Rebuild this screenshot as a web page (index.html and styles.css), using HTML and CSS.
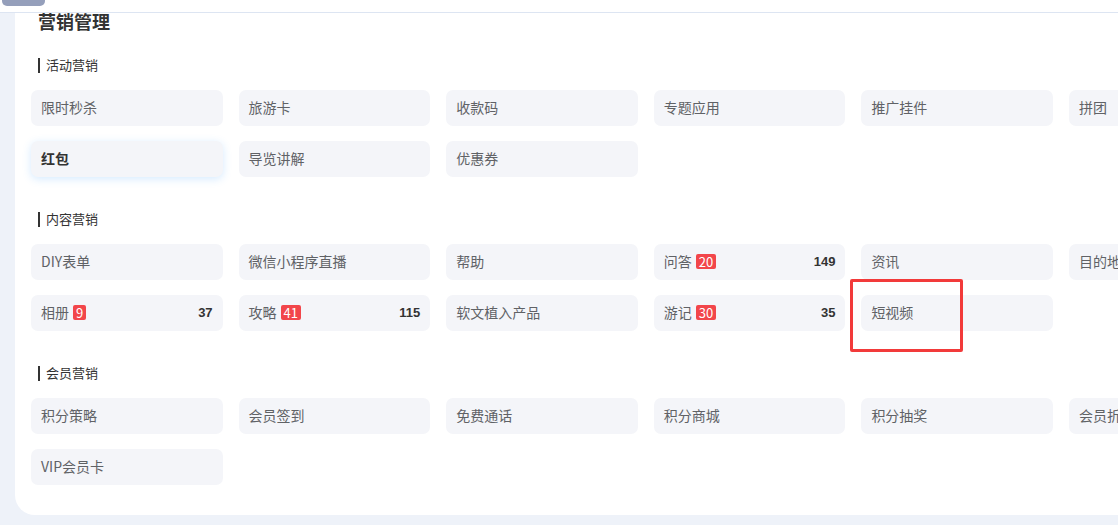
FILE: index.html
```html
<!DOCTYPE html>
<html lang="zh-CN">
<head>
<meta charset="UTF-8">
<meta name="viewport" content="width=device-width, initial-scale=1.0">
<title>营销管理</title>
<link rel="stylesheet" href="styles.css">
</head>
<body>
    <div class="topbar"><span class="topbar-tab"></span></div>

    <div class="card">
        <h1 class="page-title">营销管理</h1>

        <div class="section">
            <div class="section-title">活动营销</div>
            <div class="menu-grid">
                <div class="menu-item">限时秒杀</div>
                <div class="menu-item">旅游卡</div>
                <div class="menu-item">收款码</div>
                <div class="menu-item">专题应用</div>
                <div class="menu-item">推广挂件</div>
                <div class="menu-item">拼团</div>
                <div class="menu-item active">红包</div>
                <div class="menu-item">导览讲解</div>
                <div class="menu-item">优惠券</div>
            </div>
        </div>

        <div class="section">
            <div class="section-title">内容营销</div>
            <div class="menu-grid">
                <div class="menu-item">DIY表单</div>
                <div class="menu-item">微信小程序直播</div>
                <div class="menu-item">帮助</div>
                <div class="menu-item">问答<span class="badge">20</span><span class="count">149</span></div>
                <div class="menu-item">资讯</div>
                <div class="menu-item">目的地</div>
                <div class="menu-item">相册<span class="badge">9</span><span class="count">37</span></div>
                <div class="menu-item">攻略<span class="badge">41</span><span class="count">115</span></div>
                <div class="menu-item">软文植入产品</div>
                <div class="menu-item">游记<span class="badge">30</span><span class="count">35</span></div>
                <div class="menu-item marked">短视频<span class="mark-box"></span></div>
            </div>
        </div>

        <div class="section">
            <div class="section-title">会员营销</div>
            <div class="menu-grid">
                <div class="menu-item">积分策略</div>
                <div class="menu-item">会员签到</div>
                <div class="menu-item">免费通话</div>
                <div class="menu-item">积分商城</div>
                <div class="menu-item">积分抽奖</div>
                <div class="menu-item">会员折扣</div>
                <div class="menu-item">VIP会员卡</div>
            </div>
        </div>
    </div>
</body>
</html>
```

FILE: styles.css
```css
body {
    margin: 0;
    background-color: #eef2f9;
    font-family: "Noto Sans CJK SC", "Noto Sans", sans-serif;
    color: #333;
    overflow: hidden;
}

/* barra superior fixa por cima do conteúdo */
.topbar {
    position: fixed;
    top: 0;
    left: 0;
    right: 0;
    height: 12px;
    background-color: #fff;
    border-bottom: 1px solid #dde5f2;
    z-index: 10;
}
.topbar-tab {
    position: absolute;
    left: 2px;
    top: 0;
    width: 43px;
    height: 6px;
    background-color: #959fbb;
    border-radius: 0 0 5px 5px;
}

.card {
    margin-left: 15px;
    width: 1300px;
    background-color: #fff;
    border-radius: 0 0 0 20px;
    padding: 10px 0 30px 16px;
}

.page-title {
    margin: -1px 0 22px 7px;
    font-size: 18px;
    line-height: 24px;
    font-weight: bold;
    color: #333;
}

.section + .section {
    margin-top: 32px;
}
.section-title {
    display: flex;
    align-items: center;
    margin: 0 0 15px 7px;
    font-size: 13px;
    line-height: 20px;
    color: #333;
}
.section-title::before {
    content: "";
    width: 2px;
    height: 15px;
    background-color: #333;
    margin-right: 6px;
}

.menu-grid {
    display: grid;
    grid-template-columns: repeat(6, 191.6px);
    column-gap: 16px;
    row-gap: 15px;
}
.menu-item {
    position: relative;
    box-sizing: border-box;
    display: flex;
    align-items: center;
    height: 36px;
    padding: 0 10px 2px;
    background-color: #f4f5f9;
    border-radius: 7px;
    font-size: 14px;
    color: #606266;
}
.menu-item.active {
    font-weight: bold;
    color: #333;
    box-shadow: 0 2px 8px rgba(64, 158, 255, 0.22);
}

.badge {
    margin-left: 4px;
    padding: 0 3px;
    min-width: 7px;
    text-align: center;
    height: 15px;
    line-height: 15px;
    font-size: 13px;
    color: #fff;
    background-color: #f2464b;
    border-radius: 2px;
}
.count {
    margin-left: auto;
    font-family: "Liberation Sans", Arial, sans-serif;
    font-size: 13px;
    font-weight: bold;
    color: #333;
}

/* marcação vermelha sobre o item */
.mark-box {
    position: absolute;
    left: -11px;
    top: -16px;
    width: 113px;
    height: 73px;
    box-sizing: border-box;
    border: 3px solid #f23a3a;
    border-radius: 2px;
}
```
